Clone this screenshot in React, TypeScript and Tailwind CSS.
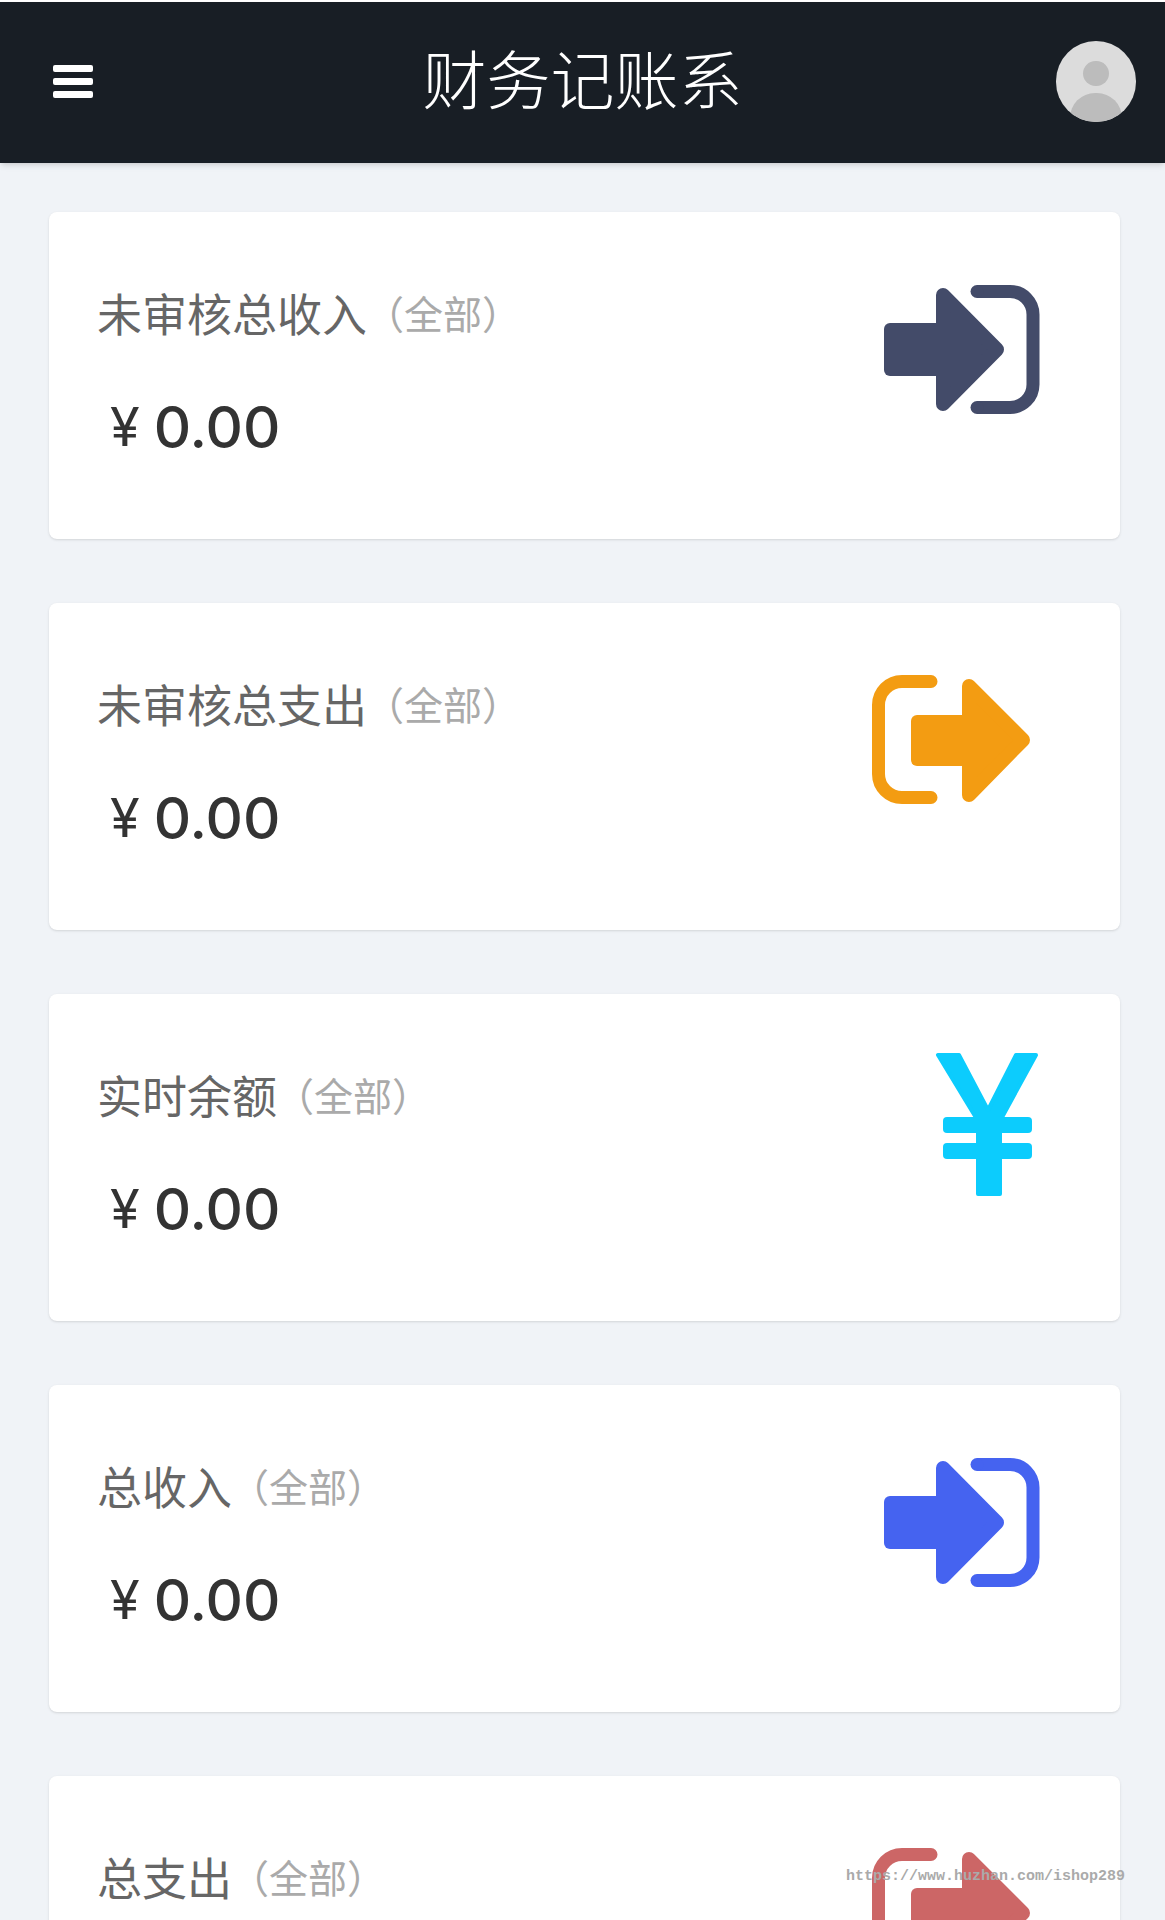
const cjk = { fontFamily: '"Noto Sans CJK SC", "Noto Sans", sans-serif' };

function LoginIcon({ color }: { color: string }) {
  return (
    <svg width="180" height="180" viewBox="0 0 180 180" fill={color}>
      <rect x="24" y="81" width="60" height="53" rx="6" />
      <path d="M83 53 L83 162 L137 107.5 Z" stroke={color} strokeWidth="14" strokeLinejoin="round" />
      <path d="M117 49.5 H150 A23 23 0 0 1 173 72.5 V142.5 A23 23 0 0 1 150 165.5 H117" fill="none" stroke={color} strokeWidth="13" />
      <circle cx="117" cy="49.5" r="6.5" />
      <circle cx="117" cy="165.5" r="6.5" />
    </svg>
  );
}

function LogoutIcon({ color }: { color: string }) {
  return (
    <svg width="180" height="180" viewBox="0 0 180 180" fill={color}>
      <rect x="51" y="82" width="60" height="51" rx="6" />
      <path d="M109 53 L109 162 L163 107 Z" stroke={color} strokeWidth="14" strokeLinejoin="round" />
      <path d="M71 48.5 H42 A23.5 23.5 0 0 0 18.5 72 V141 A23.5 23.5 0 0 0 42 164.5 H71" fill="none" stroke={color} strokeWidth="13" strokeLinecap="round" />
    </svg>
  );
}

function YenIcon({ color }: { color: string }) {
  return (
    <svg width="180" height="180" viewBox="0 0 180 180" fill={color}>
      <path d="M78 31 H99 L128 86 L156 31 H176 L140 97 V170 H118 V97 Z" stroke={color} strokeWidth="4" strokeLinejoin="round" />
      <rect x="83" y="93" width="89" height="16" rx="4" />
      <rect x="83" y="119" width="89" height="16" rx="4" />
    </svg>
  );
}

const cards = [
  { title: "未审核总收入", value: "0.00", icon: <LoginIcon color="#434b69" /> },
  { title: "未审核总支出", value: "0.00", icon: <LogoutIcon color="#f39c12" /> },
  { title: "实时余额", value: "0.00", icon: <YenIcon color="#0cccfd" /> },
  { title: "总收入", value: "0.00", icon: <LoginIcon color="#4563f0" /> },
  { title: "总支出", value: null, icon: <LogoutIcon color="#cc6666" /> },
];

export default function App() {
  return (
    <div className="relative h-[1920px] overflow-hidden bg-[#f0f3f7]" style={cjk}>
      <div className="h-[2px] bg-white" />
      {/* Top bar */}
      <div className="relative grid h-[161px] grid-cols-[1fr_auto_1fr] items-center bg-[#181e25] px-[29px] shadow-md">
        <div className="ml-[24px] -mt-[2px] flex w-[40px] flex-col gap-[6px]">
          <div className="h-[7px] rounded-[2px] bg-white" />
          <div className="h-[7px] rounded-[2px] bg-white" />
          <div className="h-[7px] rounded-[2px] bg-white" />
        </div>
        <div className="mb-[13px] text-[64px] font-light leading-none text-white">财务记账系</div>
        <div className="relative ml-auto -mt-[2px] h-[81px] w-[80px] overflow-hidden rounded-full bg-[#dcdcdc]">
          <div className="absolute left-[27px] top-[20px] h-[25px] w-[26px] rounded-full bg-[#bcbcbc]" />
          <div className="absolute left-[14px] top-[52px] h-[50px] w-[52px] rounded-full bg-[#bcbcbc]" />
        </div>
      </div>

      {/* Cards */}
      <div className="flex flex-col gap-[64px] pl-[49px] pr-[45px] pt-[49px]">
        {cards.map((card) => (
          <div key={card.title} className="flex h-[327px] shrink-0 items-start justify-between rounded-lg bg-white pl-[48px] pr-[80px] shadow-sm">
            <div className="flex flex-col">
              <div className="mt-[67px] flex h-[66px] items-center">
                <span className="text-[45px] leading-none text-[#666666]">{card.title}</span>
                <span className="-ml-[2px] text-[39px] leading-none text-[#aaaaaa]">（全部）</span>
              </div>
              {card.value && (
                <div className="mt-[47px] flex items-center text-[#333333]" style={{ fontFamily: '"Inter", "Noto Sans CJK SC", sans-serif' }}>
                  <span className="ml-[13px] text-[54px] leading-[70px]">¥</span>
                  <span className="ml-[14px] text-[58px] font-[450] leading-[70px]">{card.value}</span>
                </div>
              )}
            </div>
            <div className="mt-[30px]">{card.icon}</div>
          </div>
        ))}
      </div>

      {/* Watermark */}
      <div className="absolute left-[846px] top-[1867px] text-[15px] font-bold leading-[20px] text-[#aaaaaa]" style={{ fontFamily: '"Liberation Mono", monospace' }}>
        https://www.huzhan.com/ishop289
      </div>
    </div>
  );
}
